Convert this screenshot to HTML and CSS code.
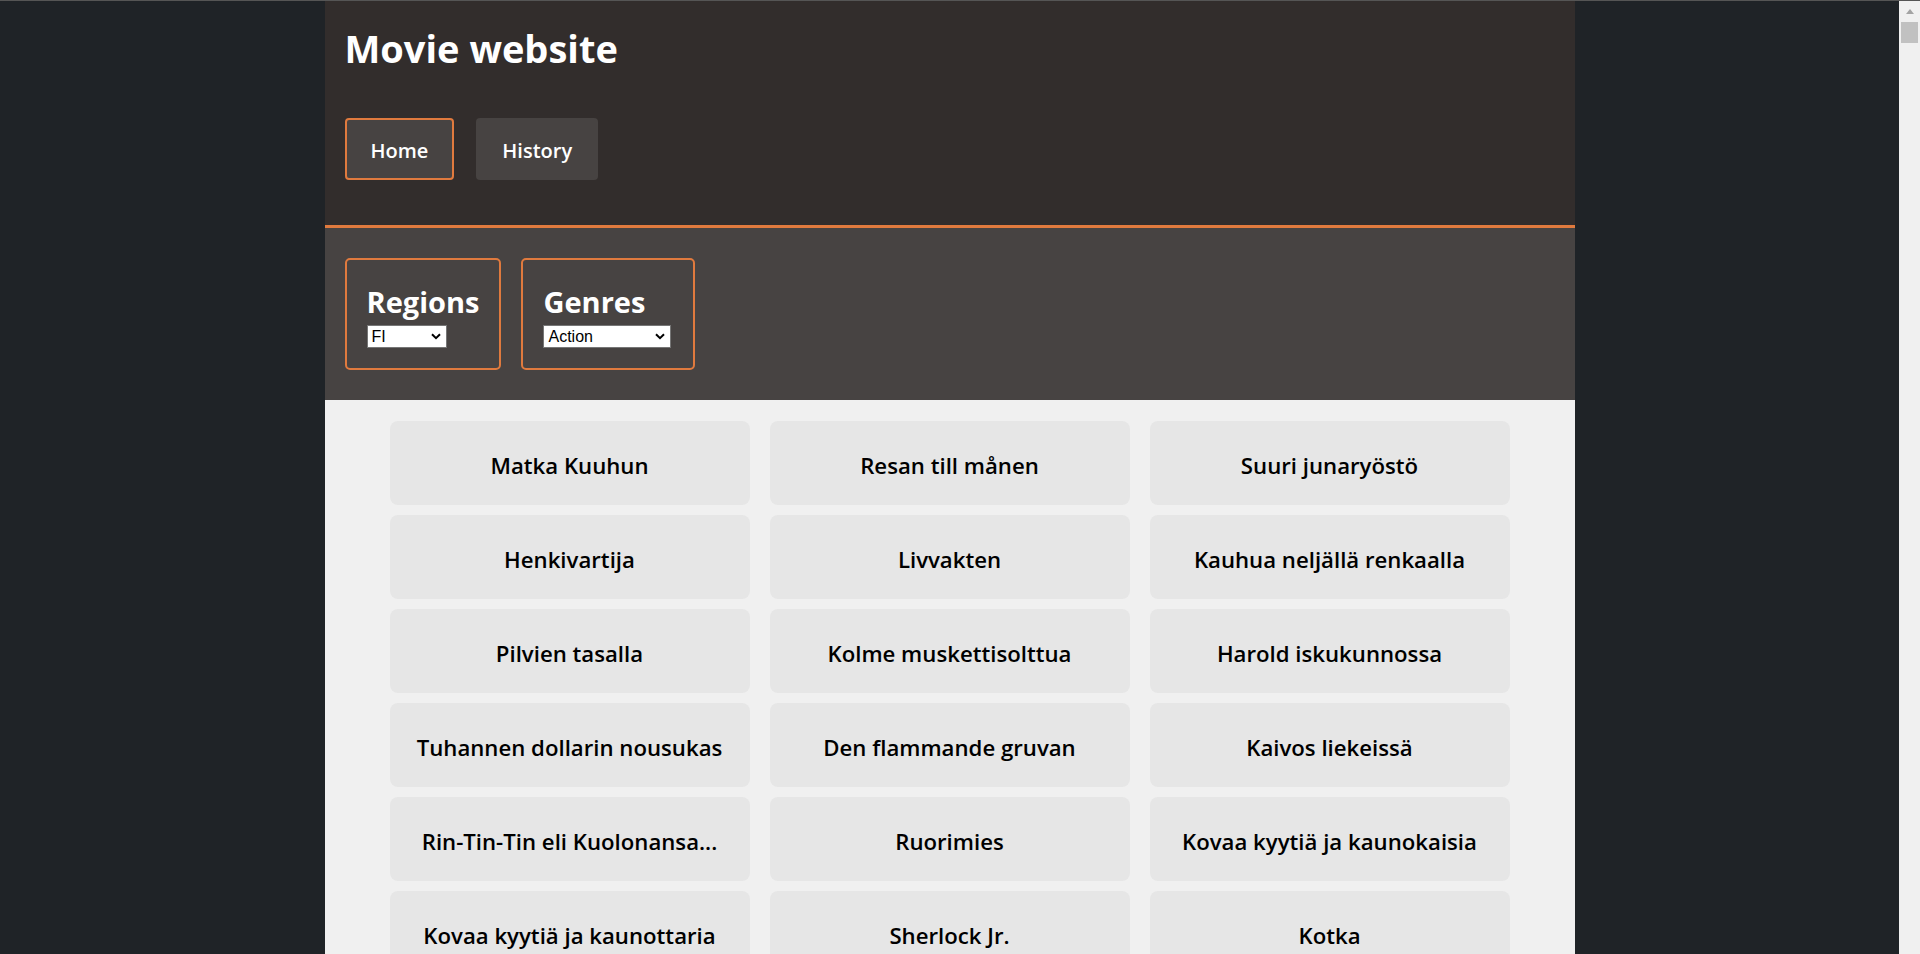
FILE: index.html
```html
<!DOCTYPE html>
<html lang="fi">
<head>
<meta charset="utf-8">
<title>Movie website</title>
<link rel="stylesheet" href="styles.css">
</head>
<body>
<div class="window">
  <div class="viewport">
    <div class="app">
      <header class="site-header">
        <h1 class="site-title">Movie website</h1>
        <nav class="site-nav">
          <a class="nav-btn is-active" href="#">Home</a>
          <a class="nav-btn" href="#">History</a>
        </nav>
      </header>
      <section class="filters">
        <div class="filter-box">
          <h2 class="filter-title">Regions</h2>
          <label class="select-wrap select-region">
            <select class="filter-select">
              <option>FI</option>
              <option>SE</option>
              <option>EE</option>
            </select>
            <svg class="select-chevron" viewBox="0 0 10 7" aria-hidden="true"><path d="M1 1.2l4 4 4-4" fill="none" stroke="#000" stroke-width="2"/></svg>
          </label>
        </div>
        <div class="filter-box">
          <h2 class="filter-title">Genres</h2>
          <label class="select-wrap select-genre">
            <select class="filter-select">
              <option>Action</option>
              <option>Adventure</option>
              <option>Comedy</option>
              <option>Drama</option>
            </select>
            <svg class="select-chevron" viewBox="0 0 10 7" aria-hidden="true"><path d="M1 1.2l4 4 4-4" fill="none" stroke="#000" stroke-width="2"/></svg>
          </label>
        </div>
      </section>
      <main class="movies">
        <div class="movie-grid">
          <div class="movie-card">Matka Kuuhun</div>
          <div class="movie-card">Resan till månen</div>
          <div class="movie-card">Suuri junaryöstö</div>
          <div class="movie-card">Henkivartija</div>
          <div class="movie-card">Livvakten</div>
          <div class="movie-card">Kauhua neljällä renkaalla</div>
          <div class="movie-card">Pilvien tasalla</div>
          <div class="movie-card">Kolme muskettisolttua</div>
          <div class="movie-card">Harold iskukunnossa</div>
          <div class="movie-card">Tuhannen dollarin nousukas</div>
          <div class="movie-card">Den flammande gruvan</div>
          <div class="movie-card">Kaivos liekeissä</div>
          <div class="movie-card">Rin-Tin-Tin eli Kuolonansa...</div>
          <div class="movie-card">Ruorimies</div>
          <div class="movie-card">Kovaa kyytiä ja kaunokaisia</div>
          <div class="movie-card">Kovaa kyytiä ja kaunottaria</div>
          <div class="movie-card">Sherlock Jr.</div>
          <div class="movie-card">Kotka</div>
        </div>
      </main>
    </div>
  </div>
  <div class="scrollbar" aria-hidden="true">
    <span class="sb-arrow"></span>
    <span class="sb-thumb"></span>
  </div>
</div>
</body>
</html>
```

FILE: styles.css
```css
html, body {
  margin: 0;
  height: 100%;
  overflow: hidden;
}

body {
  font-family: "Open Sans", "Noto Sans", sans-serif;
  background: #1f2327;
}

.window {
  box-sizing: border-box;
  height: 100%;
  border-top: 1px solid #555555;
  display: flex;
}

.viewport {
  flex: 1;
  min-width: 0;
  overflow: hidden;
  background: #1f2327;
}

.app {
  width: 1250px;
  margin: 0 auto;
}

/* Header */
.site-header {
  background: #322d2c;
  padding: 19px 20px 45px;
  border-bottom: 3px solid #e07a3e;
}

.site-title {
  margin: 0;
  font-size: 38px;
  line-height: 56px;
  font-weight: 700;
  color: #ffffff;
}

.site-nav {
  margin-top: 42px;
  display: flex;
  gap: 22px;
}

.nav-btn {
  box-sizing: border-box;
  height: 62px;
  display: inline-flex;
  align-items: center;
  padding: 2px 24px 0;
  border: 2px solid transparent;
  border-radius: 4px;
  background: #474342;
  color: #ffffff;
  font-size: 20px;
  font-weight: 600;
  text-decoration: none;
}

.nav-btn.is-active {
  border-color: #e07a3e;
}

/* Filters */
.filters {
  background: #474342;
  padding: 30px 20px;
  display: flex;
  align-items: flex-start;
  gap: 20px;
}

.filter-box {
  border: 2px solid #e07a3e;
  border-radius: 5px;
  padding: 20px;
  display: flex;
  flex-direction: column;
  align-items: flex-start;
}

.filter-title {
  margin: 0 0 3px;
  padding-top: 2px;
  font-size: 29px;
  line-height: 40px;
  font-weight: 700;
  color: #ffffff;
}

.select-wrap {
  position: relative;
  display: block;
  height: 23px;
}

.select-region {
  width: 80px;
}

.select-genre {
  width: 128px;
  margin-right: 2px;
}

.filter-select {
  -webkit-appearance: none;
  appearance: none;
  box-sizing: border-box;
  display: block;
  width: 100%;
  height: 23px;
  margin: 0;
  padding: 0 20px 0 4px;
  font-family: "Liberation Sans", Arial, sans-serif;
  font-size: 16px;
  background: #ffffff;
  color: #000000;
  border: 1px solid #767676;
  border-radius: 0;
}

.select-chevron {
  position: absolute;
  right: 6px;
  top: 8px;
  width: 10px;
  height: 7px;
  pointer-events: none;
}

/* Movies */
.movies {
  background: #f0f0f0;
  padding: 21px 0 40px;
}

.movie-grid {
  width: 1120px;
  margin: 0 auto;
  display: grid;
  grid-template-columns: repeat(3, 360px);
  column-gap: 20px;
  row-gap: 10px;
}

.movie-card {
  box-sizing: border-box;
  height: 84px;
  padding-top: 5px;
  background: #e6e6e6;
  border-radius: 8px;
  display: flex;
  align-items: center;
  justify-content: center;
  text-align: center;
  font-size: 22.2px;
  font-weight: 600;
  color: #000000;
}

/* Window scrollbar */
.scrollbar {
  width: 21px;
  flex: none;
  background: #f0f0f0;
  display: flex;
  flex-direction: column;
  align-items: center;
}

.sb-arrow {
  margin-top: 8px;
  width: 0;
  height: 0;
  border-left: 4.5px solid transparent;
  border-right: 4.5px solid transparent;
  border-bottom: 5px solid #a3a3a3;
}

.sb-thumb {
  margin-top: 8px;
  width: 17px;
  height: 21px;
  background: #c1c1c1;
}
```
